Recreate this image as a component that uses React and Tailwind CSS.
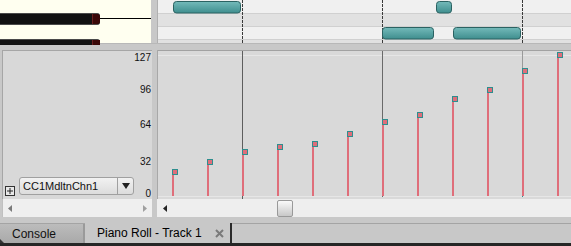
import React from 'react'

const stems = [171.7, 161.7, 151.7, 146.7, 143.7, 133.7, 121.7, 114.7, 98.7, 89.7, 70.7, 54.7]

const notes = [
  { x: 16, y: 1, w: 67 },
  { x: 279, y: 1, w: 15 },
  { x: 225, y: 27, w: 51 },
  { x: 296, y: 27, w: 67 },
]

const labels = [
  { v: '127', y: 57 },
  { v: '96', y: 89 },
  { v: '64', y: 124 },
  { v: '32', y: 161 },
  { v: '0', y: 193 },
]

const bars = [85, 225, 365]

const NoteGrid = () => (
  <svg width="414" height="43" className="block">
    <defs>
      <linearGradient id="note" x1="0" y1="0" x2="0" y2="1">
        <stop offset="0" stopColor="#74baba" />
        <stop offset="1" stopColor="#3f8e8e" />
      </linearGradient>
    </defs>
    <rect x="0" y="0" width="414" height="13" fill="#f0f0f0" />
    <rect x="0" y="13" width="414" height="13" fill="#e1e1e1" />
    <rect x="0" y="26" width="414" height="13" fill="#f0f0f0" />
    <rect x="0" y="39" width="414" height="4" fill="#e1e1e1" />
    {[13, 26, 39].map(y => (
      <rect key={y} x="0" y={y} width="414" height="1" fill="#d0d0d0" />
    ))}
    <rect x="0" y="0" width="1" height="43" fill="#b0b0b0" />
    {bars.map(x => (
      <line key={x} x1={x + 0.5} y1="0" x2={x + 0.5} y2="43" stroke="#3a3a3a" strokeDasharray="3 1" />
    ))}
    {notes.map((n, i) => (
      <rect key={i} x={n.x + 0.5} y={n.y + 0.5} width={n.w} height="11.5" rx="3" fill="url(#note)" stroke="#2b6262" />
    ))}
  </svg>
)

const CcGraph = () => (
  <svg width="414" height="149" className="block">
    <rect x="0" y="0" width="414" height="149" fill="#d9d9d9" />
    <rect x="0" y="0" width="414" height="1" fill="#a2a2a2" />
    <rect x="0" y="5" width="414" height="1" fill="#e6e6e6" />
    <rect x="0" y="146" width="414" height="1" fill="#e6e6e6" />
    <rect x="0" y="0" width="1" height="149" fill="#a8a8a8" />
    <rect x="85" y="1" width="1" height="148" fill="#5e5e5e" />
    <rect x="225" y="1" width="1" height="146" fill="#6a6a6a" />
    <rect x="365" y="1" width="1" height="19" fill="#9a9a9a" />
    <rect x="365" y="20" width="1" height="127" fill="#2f8f8f" />
    {stems.map((cy, i) => {
      const x = 15 + i * 35
      const top = Math.round(cy - 3) - 50
      return (
        <g key={i}>
          <rect x={x} y={top + 3} width="2" height={146 - top - 3} fill="#df6e7a" />
          <rect x={x + 0.5} y={top + 0.5} width="5" height="5" fill="#df6e7a" stroke="#2e8e8e" />
        </g>
      )
    })}
  </svg>
)

const ArrowLeft = () => (
  <svg width="4" height="7" viewBox="0 0 4 7"><path d="M4 0 L0 3.5 L4 7 Z" fill="#7a7a7a" /></svg>
)
const ArrowRight = () => (
  <svg width="4" height="7" viewBox="0 0 4 7"><path d="M0 0 L4 3.5 L0 7 Z" fill="#a0a0a0" /></svg>
)

export default function App() {
  return (
    <div className="w-[571px] h-[246px] overflow-hidden flex flex-col bg-[#c8c8c8] font-['Liberation_Sans',Arial,sans-serif] text-black">
      {/* note grid row */}
      <div className="h-[43px] flex">
        <div className="w-[151px] bg-[#fffff0] relative">
          <div className="absolute left-0 top-[13px] w-[100px] h-[12px] bg-[#111] border-y border-[#4a4a4a] rounded-r-[3px]">
            <div className="absolute right-0 top-0 bottom-0 w-[8px] bg-[#3a0808] border-l border-[#6a2020] rounded-r-[3px]" />
          </div>
          <div className="absolute left-[100px] top-[18px] w-[51px] h-px bg-black" />
          <div className="absolute left-0 top-[39px] w-[100px] h-[6px] bg-[#111] border-t border-[#4a4a4a] rounded-tr-[3px]">
            <div className="absolute right-0 top-0 bottom-0 w-[8px] bg-[#3a0808] border-l border-[#6a2020]" />
          </div>
        </div>
        <div className="w-[6px] bg-[#c8c8c8]" />
        <NoteGrid />
      </div>

      <div className="h-[7px] border-t border-[#b8b8b8]" />

      {/* controller row */}
      <div className="h-[149px] flex">
        <div className="w-[150px] ml-[2px] border-l border-t border-[#a6a6a6] bg-[#d8d8d8] relative flex items-end pb-[4px] pl-[2px]">
          {labels.map(l => (
            <span
              key={l.v}
              className="absolute right-[1px] text-[10px] leading-[10px] text-[#111]"
              style={{ top: l.y - 55 }}
            >
              {l.v}
            </span>
          ))}
          <div className="flex items-end gap-[4px]">
            <div className="w-[10px] h-[10px] mb-[-1px] border border-[#333] bg-[#e8e8e8] flex items-center justify-center text-[10px] leading-none text-[#222]">
              <svg width="8" height="8" viewBox="0 0 8 8"><path d="M4 1 V7 M1 4 H7" stroke="#222" strokeWidth="1" /></svg>
            </div>
            <div className="w-[115px] h-[18px] rounded-[3px] border border-[#a0a0a0] bg-gradient-to-b from-[#f2f2f2] to-[#dcdcdc] flex items-center">
              <span className="flex-1 pl-[3px] text-[11px] leading-none text-[#111]">CC1MdltnChn1</span>
              <div className="w-[16px] h-full border-l border-[#a0a0a0] flex items-center justify-center">
                <svg width="8" height="6" viewBox="0 0 8 6"><path d="M0 0 H8 L4 6 Z" fill="#222" /></svg>
              </div>
            </div>
          </div>
        </div>
        <div className="w-[5px]" />
        <CcGraph />
      </div>

      {/* scrollbars */}
      <div className="h-[18px] flex">
        <div className="w-[150px] ml-[2px] bg-[#efefef] border-l border-[#c0c0c0] flex items-center justify-between px-[5px]">
          <ArrowLeft />
          <ArrowRight />
        </div>
        <div className="w-[5px]" />
        <div className="flex-1 bg-[#eeeeee] flex items-center pl-[6px] relative">
          <svg width="4" height="7" viewBox="0 0 4 7"><path d="M4 0 L0 3.5 L4 7 Z" fill="#222" /></svg>
          <div className="absolute left-[120px] top-[1px] w-[16px] h-[17px] rounded-[2px] border border-[#999] bg-gradient-to-b from-[#fafafa] to-[#c8c8c8]" />
        </div>
      </div>

      <div className="h-[6px]" />

      {/* tab bar */}
      <div className="h-[20px] flex border-t border-[#a4a4a4]">
        <div className="w-[83px] bg-gradient-to-b from-[#bcbcbc] to-[#a9a9a9] flex items-center pl-[12px] text-[12px] text-[#111] relative">
          Console
          <div className="absolute left-0 bottom-0 w-0 h-0 border-l-[4px] border-l-[#333] border-t-[4px] border-t-transparent" />
        </div>
        <div className="w-[2px] bg-[#9a9a9a]" />
        <div className="w-[147px] bg-[#c8c8c8] border-r-2 border-[#2a2a2a] flex items-center pl-[12px] pr-[6px] text-[12px] text-black mt-[-1px]">
          <span className="flex-1">Piano Roll - Track 1</span>
          <svg width="9" height="9" viewBox="0 0 9 9"><path d="M1 1 L8 8 M8 1 L1 8" stroke="#7a7a7a" strokeWidth="2" /></svg>
        </div>
        <div className="flex-1" />
      </div>

      <div className="h-[3px] bg-[#262626]" />
    </div>
  )
}
